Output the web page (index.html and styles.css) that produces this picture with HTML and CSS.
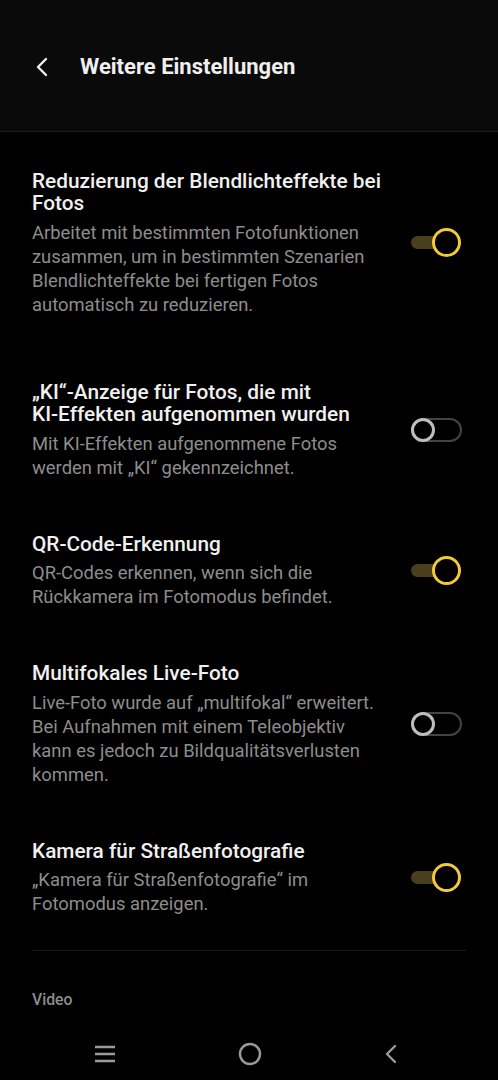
FILE: index.html
```html
<!DOCTYPE html>
<html lang="de">
<head>
<meta charset="utf-8">
<link rel="stylesheet" href="styles.css">
</head>
<body>
<div class="screen">
  <header class="topbar">
    <svg class="back" width="14" height="20" viewBox="0 0 14 20"><path d="M11 2 L3 10 L11 18" fill="none" stroke="#f2f2f2" stroke-width="2.4" stroke-linecap="round" stroke-linejoin="round"/></svg>
    <h1 class="title">Weitere Einstellungen</h1>
  </header>
  <main class="list">
    <div class="row row-first">
      <div class="text">
        <div class="name">Reduzierung der Blendlichteffekte bei Fotos</div>
        <div class="desc">Arbeitet mit bestimmten Fotofunktionen zusammen, um in bestimmten Szenarien Blendlichteffekte bei fertigen Fotos automatisch zu reduzieren.</div>
      </div>
      <div class="toggle on"><span class="track"></span><span class="knob"></span></div>
    </div>
    <div class="row">
      <div class="text">
        <div class="name">„KI“-Anzeige für Fotos, die mit <span class="nowrap">KI-Effekten</span> aufgenommen wurden</div>
        <div class="desc">Mit KI-Effekten aufgenommene Fotos werden mit „KI“ gekennzeichnet.</div>
      </div>
      <div class="toggle off"><span class="track"></span><span class="knob"></span></div>
    </div>
    <div class="row">
      <div class="text">
        <div class="name">QR-Code-Erkennung</div>
        <div class="desc">QR-Codes erkennen, wenn sich die Rückkamera im Fotomodus befindet.</div>
      </div>
      <div class="toggle on"><span class="track"></span><span class="knob"></span></div>
    </div>
    <div class="row">
      <div class="text">
        <div class="name">Multifokales Live-Foto</div>
        <div class="desc">Live-Foto wurde auf „multifokal“ erweitert. Bei Aufnahmen mit einem Teleobjektiv<br>kann es jedoch zu Bildqualitätsverlusten kommen.</div>
      </div>
      <div class="toggle off"><span class="track"></span><span class="knob"></span></div>
    </div>
    <div class="row">
      <div class="text">
        <div class="name">Kamera für Straßenfotografie</div>
        <div class="desc">„Kamera für Straßenfotografie“ im Fotomodus anzeigen.</div>
      </div>
      <div class="toggle on"><span class="track"></span><span class="knob"></span></div>
    </div>
    <div class="divider"></div>
    <div class="section">Video</div>
  </main>
  <nav class="navbar">
    <svg width="22" height="20" viewBox="0 0 22 20"><path d="M1 3 H21 M1 10 H21 M1 17 H21" stroke="#9a9a9a" stroke-width="2.4"/></svg>
    <svg width="26" height="26" viewBox="0 0 26 26"><circle cx="13" cy="13" r="10" fill="none" stroke="#9a9a9a" stroke-width="2.4"/></svg>
    <svg width="14" height="22" viewBox="0 0 14 22"><path d="M11 3 L3 11 L11 19" fill="none" stroke="#9a9a9a" stroke-width="2.4" stroke-linecap="round" stroke-linejoin="round"/></svg>
  </nav>
</div>
</body>
</html>
```
FILE: styles.css
```css
* { box-sizing: border-box; }
html, body { margin: 0; padding: 0; background: #000; }
body { font-family: Roboto, "Noto Sans", sans-serif; width: 498px; height: 1080px; overflow: hidden; }
.screen { display: flex; flex-direction: column; height: 1080px; }
.topbar {
  height: 132px;
  flex: none;
  background: #0a0a0a;
  border-bottom: 1px solid #1c1c1c;
  display: flex;
  align-items: center;
  padding: 2px 0 0 35px;
  gap: 31px;
}
.back { flex: none; }
.title { margin: 0; font-size: 22px; font-weight: 700; color: #efefef; }
.list { flex: 1; padding: 11px 32px 0 32px; display: flex; flex-direction: column; }
.row { display: flex; align-items: center; justify-content: space-between; padding: 26.5px 0; }
.row-first { padding-bottom: 37.5px; }
.text { width: 362px; }
.nowrap { white-space: nowrap; }
.name { font-size: 20.8px; font-weight: 500; color: #f0f0f0; line-height: 22.5px; }
.desc { font-size: 18.4px; color: #8d8d8d; line-height: 24px; margin-top: 6px; }
.toggle { position: relative; width: 52px; height: 30px; margin-right: 4px; flex: none; }
.toggle .track { position: absolute; border-radius: 7px; }
.toggle .knob { position: absolute; border-radius: 50%; }
.toggle.on .track { background: #4a3f1d; left: 1px; top: 8px; width: 36px; height: 13px; }
.toggle.on .knob { left: 22px; top: 0; width: 29px; height: 29px; border: 3px solid #f1c93b; background: #000; }
.toggle.off .track { left: 1px; top: 3px; width: 51px; height: 24px; border: 2px solid #444; border-radius: 12px; }
.toggle.off .knob { left: 1px; top: 3px; width: 24px; height: 24px; border: 3px solid #bdbdbd; background: #000; }
.divider { height: 1px; background: #1c1c1c; margin-top: 7px; }
.section { font-size: 15.8px; font-weight: 500; color: #8d8d8d; margin-top: 39px; }
.navbar { height: 60px; flex: none; display: flex; align-items: center; justify-content: space-between; padding: 8px 100px 0 94px; }
```
